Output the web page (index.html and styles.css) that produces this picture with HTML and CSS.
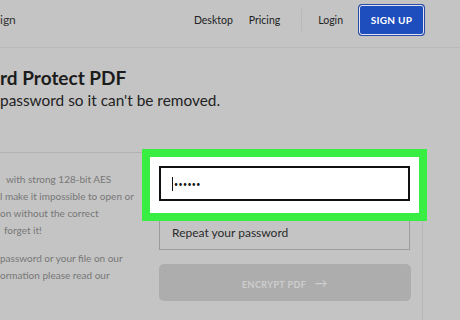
FILE: index.html
```html
<!DOCTYPE html>
<html lang="en">
<head>
    <meta charset="UTF-8">
    <meta name="viewport" content="width=device-width, initial-scale=1.0">
    <title>Password Protect PDF</title>
    <link rel="stylesheet" href="styles.css">
</head>
<body>

    <!-- Top navigation -->
    <div class="nav">
        <div class="brand">ign</div>
        <a class="nav-link" href="#">Desktop</a>
        <a class="nav-link pricing" href="#">Pricing</a>
        <div class="nav-divider"></div>
        <a class="nav-link login" href="#">Login</a>
        <button class="signup-btn">SIGN UP</button>
    </div>

    <!-- Heading -->
    <div class="hero">
        <h1>rd Protect PDF</h1>
        <p>password so it can't be removed.</p>
    </div>

    <div class="main">
        <!-- Info text -->
        <div class="info">
            <div class="line l1">with strong 128-bit AES</div>
            <div class="line">l make it impossible to open or</div>
            <div class="line">on without the correct</div>
            <div class="line l4">forget it!</div>
            <div class="line gap">password or your file on our</div>
            <div class="line">ormation please read our</div>
        </div>

        <!-- Password form -->
        <div class="form-panel">
            <div class="highlight">
                <div class="field active">
                    <span class="cursor"></span><span class="dots">&bull;&bull;&bull;&bull;&bull;&bull;</span>
                </div>
            </div>
            <div class="field repeat">Repeat your password</div>
            <button class="encrypt-btn">ENCRYPT PDF <span class="arrow">&rarr;</span></button>
        </div>
    </div>

</body>
</html>
```

FILE: styles.css
```css
* {
    margin: 0;
    padding: 0;
    box-sizing: border-box;
}

body {
    background-color: #c4c4c4;
    color: #222;
    font-family: Lato, "Open Sans", sans-serif;
    width: 460px;
    height: 320px;
    overflow: hidden;
}

/* Navigation */
.nav {
    display: flex;
    align-items: flex-start;
    height: 48px;
    padding-top: 5px;
    border-bottom: 1px solid #b9b9b9;
}

.brand {
    flex: 1;
    font-size: 12px;
    line-height: 30px;
    color: #333;
}

.nav-link {
    font-size: 10.5px;
    line-height: 30px;
    color: #222;
    text-decoration: none;
}

.pricing {
    margin-left: 16px;
}

.nav-divider {
    width: 1px;
    height: 22px;
    margin: 4px 16px 0 21px;
    background-color: #b8b8b8;
}

.signup-btn {
    margin: 0 36px 0 16px;
    width: 65px;
    height: 30px;
    background-color: #1e4ebe;
    border: 1px solid #e4e4ee;
    box-shadow: 0 0 0 1px #2a4aa8;
    border-radius: 3px;
    color: #fff;
    font-family: Lato, sans-serif;
    font-size: 10px;
    font-weight: bold;
    letter-spacing: 0.3px;
}

/* Heading */
.hero {
    padding-top: 18px;
}

.hero h1 {
    font-size: 19px;
    font-weight: bold;
    color: #1c1c1c;
    line-height: 24px;
}

.hero p {
    font-size: 15.4px;
    color: #222;
    line-height: 21px;
}

/* Main area */
.main {
    display: flex;
    margin-top: 41px;
}

.info {
    width: 143px;
    border-top: 1px solid #b3b3b3;
    padding-top: 18px;
    font-size: 10px;
    color: #777;
    white-space: nowrap;
}

.line {
    height: 17px;
    line-height: 17px;
}

.l1 {
    padding-left: 6px;
}

.l4 {
    padding-left: 4px;
}

.gap {
    margin-top: 11px;
}

.form-panel {
    width: 280px;
    padding: 15px 12px 0 16px;
    border-right: 1px solid #b6b6b6;
    height: 170px;
}

.highlight {
    position: relative;
    z-index: 1;
    margin: -18px -17px -20px -17px;
    padding: 9px 9px 12px 9px;
    background-color: #fff;
    border: 8px solid #38ee42;
}

.field {
    height: 35px;
    display: flex;
    align-items: center;
    padding-left: 13px;
}

.active {
    border: 2px solid #111;
    background-color: #fff;
    padding-left: 11px;
}

.cursor {
    width: 1px;
    height: 14px;
    background-color: #111;
    margin-right: 1px;
}

.dots {
    font-size: 7px;
    letter-spacing: 0.4px;
    color: #111;
}

.repeat {
    margin-top: 14px;
    border: 1px solid #9c9c9c;
    padding-left: 12px;
    font-size: 12px;
    color: #2a2a2a;
}

.encrypt-btn {
    margin-top: 14px;
    width: 252px;
    height: 37px;
    background-color: #adadad;
    border: none;
    border-radius: 5px;
    color: #cdcdcd;
    font-family: Lato, sans-serif;
    font-size: 9px;
    font-weight: bold;
    letter-spacing: 0.4px;
}

.arrow {
    font-size: 13px;
    margin-left: 6px;
    font-weight: normal;
}
```
